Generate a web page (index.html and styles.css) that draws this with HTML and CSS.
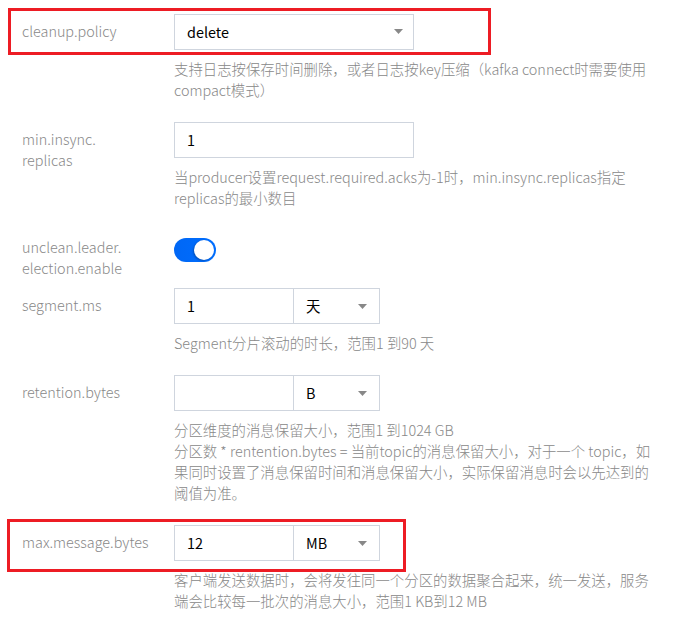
FILE: index.html
```html
<!DOCTYPE html>
<html lang="zh-CN">
<head>
<meta charset="utf-8">
<title>Topic 配置</title>
<link rel="stylesheet" href="styles.css">
</head>
<body>
<div class="form">
  <div class="row">
    <div class="label">cleanup.policy</div>
    <div class="field">
      <div class="select select-wide"><span>delete</span>
        <svg class="caret" width="9" height="5" viewBox="0 0 9 5"><path d="M0 0H9L4.5 5Z" fill="#888"/></svg>
      </div>
      <div class="help">支持日志按保存时间删除，或者日志按key压缩（kafka connect时需要使用<br>compact模式）</div>
    </div>
    <div class="mark mark-top"></div>
  </div>

  <div class="row">
    <div class="label">min.insync.<br>replicas</div>
    <div class="field">
      <div class="input input-wide">1</div>
      <div class="help">当producer设置request.required.acks为-1时，min.insync.replicas指定<br>replicas的最小数目</div>
    </div>
  </div>

  <div class="row row-switch">
    <div class="label">unclean.leader.<br>election.enable</div>
    <div class="field">
      <div class="switch"><span class="knob"></span></div>
    </div>
  </div>

  <div class="row">
    <div class="label">segment.ms</div>
    <div class="field">
      <div class="group">
        <div class="g-input">1</div>
        <div class="g-select"><span>天</span>
          <svg class="caret" width="9" height="5" viewBox="0 0 9 5"><path d="M0 0H9L4.5 5Z" fill="#888"/></svg>
        </div>
      </div>
      <div class="help">Segment分片滚动的时长，范围1 到90 天</div>
    </div>
  </div>

  <div class="row">
    <div class="label">retention.bytes</div>
    <div class="field">
      <div class="group">
        <div class="g-input"></div>
        <div class="g-select"><span>B</span>
          <svg class="caret" width="9" height="5" viewBox="0 0 9 5"><path d="M0 0H9L4.5 5Z" fill="#888"/></svg>
        </div>
      </div>
      <div class="help">分区维度的消息保留大小，范围1 到1024 GB<br>分区数 * rentention.bytes = 当前topic的消息保留大小，对于一个 topic，如<br>果同时设置了消息保留时间和消息保留大小，实际保留消息时会以先达到的<br>阈值为准。</div>
    </div>
  </div>

  <div class="row">
    <div class="label">max.message.bytes</div>
    <div class="field">
      <div class="group">
        <div class="g-input">12</div>
        <div class="g-select"><span>MB</span>
          <svg class="caret" width="9" height="5" viewBox="0 0 9 5"><path d="M0 0H9L4.5 5Z" fill="#888"/></svg>
        </div>
      </div>
      <div class="help">客户端发送数据时，会将发往同一个分区的数据聚合起来，统一发送，服务<br>端会比较每一批次的消息大小，范围1 KB到12 MB</div>
    </div>
    <div class="mark mark-bottom"></div>
  </div>
</div>
</body>
</html>
```

FILE: styles.css
```css
html, body {
  margin: 0;
  padding: 0;
  background: #fff;
}

body {
  font-family: "Noto Sans CJK SC", "Liberation Sans", sans-serif;
  font-size: 14.4px;
  color: #000;
}

.form {
  padding: 14px 0 0 22px;
}

.row {
  position: relative;
  display: grid;
  grid-template-columns: 152px 1fr;
  margin-bottom: 22px;
}

.row-switch {
  margin-bottom: 10px;
}

.label {
  color: #888;
  font-weight: 300;
  line-height: 21px;
  padding-top: 6px;
  white-space: nowrap;
}

.field {
  display: flex;
  flex-direction: column;
  align-items: flex-start;
}

.help {
  margin-top: 8px;
  color: #888;
  font-weight: 300;
  line-height: 21px;
  white-space: nowrap;
}

.select,
.input,
.group {
  box-sizing: border-box;
  height: 36px;
  border: 1px solid #cfd5de;
  background: #fff;
}

.select {
  display: flex;
  align-items: center;
  justify-content: space-between;
  padding: 0 10px 2px 12px;
}

.select-wide {
  width: 240px;
}

.input {
  display: flex;
  align-items: center;
  padding: 0 12px 2px;
}

.input-wide {
  width: 240px;
}

.group {
  display: flex;
  width: 206px;
}

.g-input {
  box-sizing: border-box;
  width: 119px;
  border-right: 1px solid #cfd5de;
  display: flex;
  align-items: center;
  padding: 0 12px 2px;
}

.g-select {
  flex: 1;
  display: flex;
  align-items: center;
  justify-content: space-between;
  padding: 0 12px 0 12px;
}

.g-select span {
  margin-bottom: 2px;
}

.caret {
  display: block;
  flex: none;
}

.switch {
  position: relative;
  box-sizing: border-box;
  width: 42px;
  height: 24px;
  margin-top: 8px;
  border-radius: 12px;
  background: linear-gradient(90deg, #0067f5, #006eff);
}

.knob {
  position: absolute;
  top: 2px;
  right: 2px;
  width: 20px;
  height: 20px;
  border-radius: 50%;
  background: #fff;
  box-shadow: -1px 1px 2px rgba(0, 0, 0, 0.25);
}

.mark {
  position: absolute;
  box-sizing: border-box;
  border: 3px solid #ed1c24;
  pointer-events: none;
}

.mark-top {
  left: -14px;
  top: -6px;
  width: 483px;
  height: 47px;
}

.mark-bottom {
  left: -15px;
  top: -6px;
  width: 399px;
  height: 53px;
}
```
